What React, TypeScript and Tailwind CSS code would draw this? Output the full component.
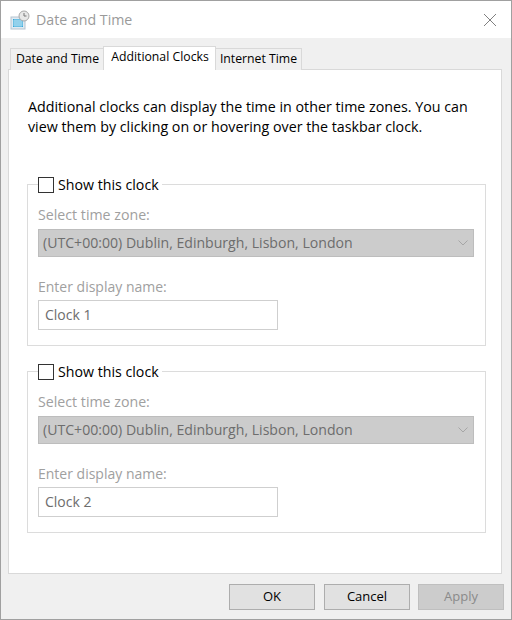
const font = { fontFamily: '"Open Sans", "Noto Sans", sans-serif' };

function ClockGroup({ name }: { name: string }) {
  return (
    <div className="border border-[#dcdcdc] h-[162px] pl-[10px] pr-[11px]">
      <div className="-mt-[9px] flex items-center w-fit bg-white pr-[3px] h-[18px] text-[#000]">
        <div className="w-[16px] h-[16px] border border-[#333] bg-white mr-[4px]" />
        <span className="text-[14.2px]">Show this clock</span>
      </div>
      <div className="text-[#a0a0a0] mt-[11px] h-[20px] leading-[20px] text-[14.2px]">Select time zone:</div>
      <div className="mt-[4px] h-[28px] bg-[#cccccc] border border-[#bdbdbd] flex items-center justify-between pl-[4px] pr-[5px] text-[#6d6d6d] text-[14.1px]">
        <span className="whitespace-nowrap">(UTC+00:00) Dublin, Edinburgh, Lisbon, London</span>
        <svg width="10" height="6" viewBox="0 0 10 6" fill="none" stroke="#a6a6a6" strokeWidth="1">
          <path d="M0.5 0.5L5 5l4.5-4.5" />
        </svg>
      </div>
      <div className="text-[#a0a0a0] mt-[20px] h-[20px] leading-[20px]">Enter display name:</div>
      <div className="mt-[3px] w-[240px] h-[30px] border border-[#cfcfcf] flex items-center pl-[6px] pb-[1px] text-[#6d6d6d]">{name}</div>
    </div>
  );
}

function Btn({ label, disabled }: { label: string; disabled?: boolean }) {
  return (
    <div className={disabled
      ? "w-[86px] h-[26px] -ml-px flex items-center justify-center border border-[#bfbfbf] bg-[#cccccc] text-[#8a8a8a] text-[13px]"
      : "w-[86px] h-[26px] flex items-center justify-center border border-[#adadad] bg-[#e1e1e1] text-[#000] text-[13px]"}>
      {label}
    </div>
  );
}

export default function App() {
  return (
    <div style={font} className="w-[512px] h-[620px] bg-[#f0f0f0] border border-[#a0a0a0] flex flex-col text-[14px] overflow-hidden">
      <div className="h-[37px] bg-white flex items-center shrink-0 pl-[9px] pr-[14px]">
        <svg width="20" height="20" viewBox="0 0 20 20" className="mr-[6px]">
          <rect x="1" y="7" width="14" height="12" fill="#dfeaf2" stroke="#b5c4cf" />
          <rect x="3" y="9" width="10" height="8" fill="#35a7d8" />
          <path d="M3 11h10M3 13h10M3 15h10M5 9v8M7 9v8M9 9v8M11 9v8" stroke="#d7f0fa" strokeWidth="0.7" />
          <circle cx="14" cy="6" r="5" fill="#e8e8e8" stroke="#a9a9a9" />
          <path d="M14 3v3h2.5" fill="none" stroke="#777" />
        </svg>
        <span className="text-[#9a9a9a] text-[14.2px]">Date and Time</span>
        <svg width="14" height="14" viewBox="0 0 14 14" className="ml-auto" stroke="#808080" fill="none">
          <path d="M1 1l12 12M13 1L1 13" />
        </svg>
      </div>
      <div className="flex-1 flex flex-col pl-[7px] pr-[9px] pt-[8px]">
        <div className="flex items-end h-[24px] pl-[2px] text-[12.25px] relative z-10 -mb-px">
          <div className="w-[94px] h-[22px] flex items-center justify-center pl-[1px] border border-[#d9d9d9] border-b-0 bg-[#f0f0f0] text-[#000]">Date and Time</div>
          <div className="w-[113px] -ml-px h-[24px] flex items-center justify-center pl-[1px] border border-[#d9d9d9] border-b-0 bg-white text-[#000] pb-[3px]">Additional Clocks</div>
          <div className="w-[86px] h-[22px] flex items-center justify-center border border-[#d9d9d9] border-l-0 border-b-0 bg-[#f0f0f0] text-[#000]">Internet Time</div>
        </div>
        <div className="h-[505px] bg-white border border-[#d9d9d9] pl-[18px] pr-[15px]">
          <p className="mt-[27px] pl-[1px] leading-[20px] text-[#000] whitespace-nowrap text-[14.25px]">
            Additional clocks can display the time in other time zones. You can<br />
            view them by clicking on or hovering over the taskbar clock.
          </p>
          <div className="mt-[47px]"><ClockGroup name="Clock 1" /></div>
          <div className="mt-[25px]"><ClockGroup name="Clock 2" /></div>
        </div>
        <div className="flex justify-end gap-[9px] mt-[10px] -mr-[2px]">
          <Btn label="OK" />
          <Btn label="Cancel" />
          <Btn label="Apply" disabled />
        </div>
      </div>
    </div>
  );
}
